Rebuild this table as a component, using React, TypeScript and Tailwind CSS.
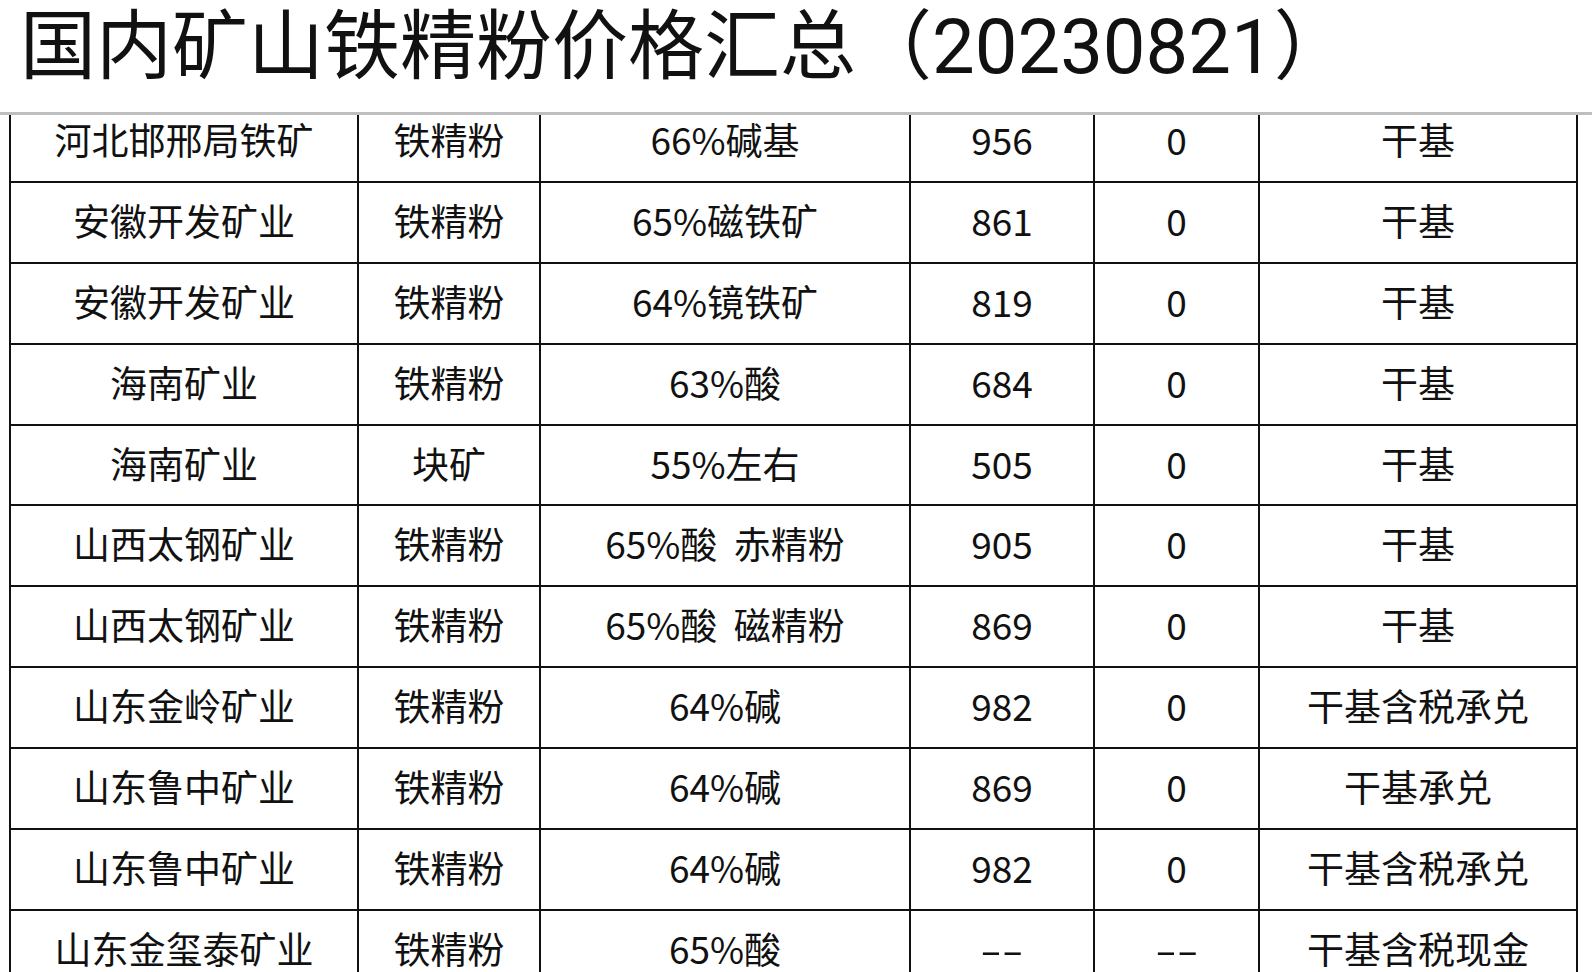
const rows = [
  ["河北邯邢局铁矿", "铁精粉", "66%碱基", "956", "0", "干基"],
  ["安徽开发矿业", "铁精粉", "65%磁铁矿", "861", "0", "干基"],
  ["安徽开发矿业", "铁精粉", "64%镜铁矿", "819", "0", "干基"],
  ["海南矿业", "铁精粉", "63%酸", "684", "0", "干基"],
  ["海南矿业", "块矿", "55%左右", "505", "0", "干基"],
  ["山西太钢矿业", "铁精粉", "65%酸  赤精粉", "905", "0", "干基"],
  ["山西太钢矿业", "铁精粉", "65%酸  磁精粉", "869", "0", "干基"],
  ["山东金岭矿业", "铁精粉", "64%碱", "982", "0", "干基含税承兑"],
  ["山东鲁中矿业", "铁精粉", "64%碱", "869", "0", "干基承兑"],
  ["山东鲁中矿业", "铁精粉", "64%碱", "982", "0", "干基含税承兑"],
  ["山东金玺泰矿业", "铁精粉", "65%酸", "--", "--", "干基含税现金"],
];

export default function App() {
  return (
    <div className="h-[972px] w-[1592px] overflow-hidden bg-white text-[#111]">
      <header className="relative z-10 h-[115px] border-b-[3px] border-[#bfbfbf] bg-white">
        <h1
          className="pl-[20px] pt-[9px] text-[76px] leading-[76px] font-normal"
          style={{ fontFamily: 'Roboto, "Noto Sans CJK SC", sans-serif' }}
        >
          国内矿山铁精粉价格汇总（20230821）
        </h1>
      </header>

      <div className="overflow-hidden">
        <div
          className="-mt-[15px] ml-[9px] w-[1569px] border-x-2 border-t-2 border-[#111]"
          style={{ fontFamily: '"Noto Sans CJK SC", sans-serif' }}
        >
          {rows.map((r, i) => (
            <div
              key={i}
              className="grid h-[80.9px] grid-cols-[348px_182px_370px_184px_165px_316px] border-b-2 border-[#111] text-[37px] leading-none"
            >
              {r.map((c, j) => (
                <div
                  key={j}
                  className={
                    "flex items-center justify-center whitespace-pre pb-[4px] " +
                    (j < 5 ? "border-r-2 border-[#111]" : "")
                  }
                >
                  {c === "--" ? (
                    <span className="inline-block scale-x-[1.7]">{c}</span>
                  ) : (
                    c
                  )}
                </div>
              ))}
            </div>
          ))}
        </div>
      </div>
    </div>
  );
}
